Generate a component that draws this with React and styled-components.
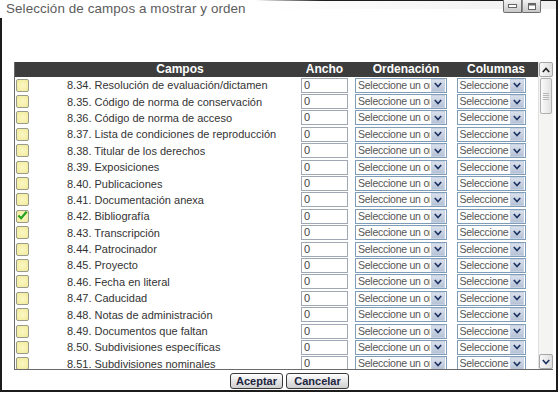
import React from "react";
import styled, { createGlobalStyle } from "styled-components";

const Global = createGlobalStyle`
  html, body { margin: 0; padding: 0; background: #fff; }
  body { font-family: "Liberation Sans", Arial, sans-serif; }
  * { box-sizing: border-box; }
`;

const Window = styled.div`
  width: 558px;
  height: 392px;
  display: flex;
  flex-direction: column;
  border-right: 2px solid #1c1c1c;
  border-bottom: 2px solid #1c1c1c;
  background: #fff;
`;

const TitleBar = styled.div`
  height: 18px;
  flex: none;
  display: flex;
  align-items: flex-start;
  justify-content: space-between;
  padding-left: 6px;
  padding-right: 15px;
  border-top: 1px solid transparent;
  border-image: linear-gradient(to right, rgba(30,30,30,0) 46%, #1c1c1c 58%) 1;
  background: linear-gradient(to right, #fff 46%, #f0f0f0 100%);
  background-size: 100% 8px;
  background-repeat: no-repeat;
`;

const Title = styled.div`
  font-size: 13.4px;
  line-height: 15px;
  color: #5c5c5c;
  letter-spacing: 0.1px;
`;

const WinButtons = styled.div`
  display: flex;
  margin-top: -1px;
`;

const WinButton = styled.div`
  width: 19px;
  height: 13px;
  border: 1px solid #6e6e6e;
  border-top: none;
  background: linear-gradient(#f2f2f2, #c8c8c8);
  display: flex;
  align-items: center;
  justify-content: center;
  & + & { border-left: 1px solid #8a8a8a; }
  &:first-child { border-bottom-left-radius: 2px; }
  &:last-child { border-bottom-right-radius: 2px; }
`;

const Main = styled.div`
  flex: 1;
  display: flex;
  flex-direction: column;
  border-left: 2px solid #1c1c1c;
  padding: 44px 3px 0 12px;
`;

const TableFrame = styled.div`
  height: 308px;
  flex: none;
  display: flex;
  border-left: 1px solid #6a6a6a;
  border-bottom: 1px solid #6a6a6a;
`;

const TableContent = styled.div`
  flex: 1;
  display: flex;
  flex-direction: column;
  min-width: 0;
`;

const cols = "47px 236px 53px 100px 80px 1fr";

const Header = styled.div`
  height: 15px;
  flex: none;
  display: grid;
  grid-template-columns: ${cols};
  background: #3d3d3d;
  color: #fff;
  font-weight: bold;
  font-size: 12px;
  line-height: 15px;
`;

const HeadCell = styled.div`
  text-align: center;
  white-space: nowrap;
  ${(p) => (p.$shift ? `transform: translateX(${p.$shift}px);` : "")}
`;

const Body = styled.div`
  flex: 1;
  overflow: hidden;
`;

const Row = styled.div`
  height: 16.4px;
  display: grid;
  grid-template-columns: ${cols};
  align-items: center;
  font-size: 11px;
  color: #333;
`;

const CheckCell = styled.div`
  padding-left: 1px;
  display: flex;
  align-items: center;
`;

const Check = styled.div`
  width: 13px;
  height: 13px;
  border: 1px solid #9a9a8a;
  border-radius: 2px;
  background: radial-gradient(circle at 50% 50%, #fbf7c4 0%, #f2eb9a 100%);
  display: flex;
  align-items: center;
  justify-content: center;
`;

const Label = styled.div`
  padding-left: 5px;
  white-space: nowrap;
  overflow: hidden;
`;

const NumInput = styled.div`
  justify-self: center;
  width: 47px;
  height: 15px;
  border: 1px solid #a0a8b4;
  background: #fff;
  font-size: 11px;
  line-height: 13px;
  padding-left: 2px;
  color: #444;
`;

const Select = styled.div`
  justify-self: center;
  width: ${(p) => p.$w}px;
  height: 15px;
  border: 1px solid #7f9db9;
  background: #fff;
  display: flex;
  align-items: stretch;
  padding: 0 1px 0 0;
`;

const SelectText = styled.div`
  flex: 1;
  min-width: 0;
  overflow: hidden;
  white-space: nowrap;
  font-size: 10.5px;
  letter-spacing: -0.25px;
  line-height: 13px;
  padding-left: 2px;
  color: #555;
`;

const Arrow = styled.div`
  width: 14px;
  flex: none;
  margin: 0 0 0 1px;
  background: linear-gradient(#d9e0ec, #b6c2d6);
  border: 1px solid #c8d2e2;
  display: flex;
  align-items: center;
  justify-content: center;
`;

const ScrollBar = styled.div`
  width: 15px;
  flex: none;
  display: flex;
  flex-direction: column;
  background: #f4f4f2;
  border-left: 1px solid #e0e0e0;
`;

const ScrollBtn = styled.div`
  height: 15px;
  flex: none;
  border: 1px solid #a6a6a6;
  border-radius: 2px;
  background: linear-gradient(to right, #f8f8f8, #dedede);
  display: flex;
  align-items: center;
  justify-content: center;
`;

const Track = styled.div`
  flex: 1;
  padding-top: 1px;
`;

const Thumb = styled.div`
  height: 36px;
  margin: 0 1px;
  border: 1px solid #b0b0b0;
  border-radius: 2px;
  background: linear-gradient(to right, #fafafa, #e2e2e2);
  display: flex;
  flex-direction: column;
  align-items: center;
  justify-content: center;
  gap: 1px;
`;

const Grip = styled.div`
  width: 6px;
  height: 1px;
  background: #b8b8b8;
`;

const ButtonRow = styled.div`
  display: flex;
  justify-content: center;
  gap: 3px;
  padding: 3px 0 0 12px;
`;

const Button = styled.div`
  height: 16px;
  width: ${(p) => p.$w}px;
  border: 1px solid #3a3a3a;
  border-radius: 3px;
  background: linear-gradient(#ffffff, #e2e2e2 60%, #cfcfcf);
  font-size: 11px;
  font-weight: bold;
  color: #1c2440;
  display: flex;
  align-items: center;
  justify-content: center;
  line-height: 14px;
`;

const Chevron = ({ up }) => (
  <svg width="8" height="6" viewBox="0 0 8 6">
    <path
      d={up ? "M0.8 5 L4 1.5 L7.2 5" : "M0.8 1 L4 4.5 L7.2 1"}
      fill="none"
      stroke={up ? "#222" : "#1f3463"}
      strokeWidth="1.7"
    />
  </svg>
);

const CheckMark = () => (
  <svg width="12" height="11" viewBox="0 0 12 11" style={{ marginTop: -2 }}>
    <path d="M1.5 5.5 L4.5 8.5 L10.5 1.5" fill="none" stroke="#22a022" strokeWidth="2.4" />
  </svg>
);

const rows = [
  "8.34. Resolución de evaluación/dictamen",
  "8.35. Código de norma de conservación",
  "8.36. Código de norma de acceso",
  "8.37. Lista de condiciones de reproducción",
  "8.38. Titular de los derechos",
  "8.39. Exposiciones",
  "8.40. Publicaciones",
  "8.41. Documentación anexa",
  "8.42. Bibliografía",
  "8.43. Transcripción",
  "8.44. Patrocinador",
  "8.45. Proyecto",
  "8.46. Fecha en literal",
  "8.47. Caducidad",
  "8.48. Notas de administración",
  "8.49. Documentos que faltan",
  "8.50. Subdivisiones específicas",
  "8.51. Subdivisiones nominales",
];

export default function App() {
  return (
    <>
      <Global />
      <Window>
        <TitleBar>
          <Title>Selección de campos a mostrar y orden</Title>
          <WinButtons>
            <WinButton>
              <svg width="9" height="4" viewBox="0 0 9 4">
                <rect x="0.5" y="0.5" width="8" height="3" fill="#fff" stroke="#666" />
              </svg>
            </WinButton>
            <WinButton>
              <svg width="8" height="7" viewBox="0 0 8 7">
                <rect x="0.5" y="0.5" width="7" height="6" fill="#fff" stroke="#666" />
                <rect x="0.5" y="0.5" width="7" height="2" fill="#666" />
              </svg>
            </WinButton>
          </WinButtons>
        </TitleBar>
        <Main>
          <TableFrame>
            <TableContent>
              <Header>
                <HeadCell />
                <HeadCell>Campos</HeadCell>
                <HeadCell>Ancho</HeadCell>
                <HeadCell $shift={5}>Ordenación</HeadCell>
                <HeadCell $shift={5}>Columnas</HeadCell>
                <HeadCell />
              </Header>
              <Body>
                {rows.map((r, i) => (
                  <Row key={r}>
                    <CheckCell>
                      <Check>{i === 8 && <CheckMark />}</Check>
                    </CheckCell>
                    <Label>{r}</Label>
                    <NumInput>0</NumInput>
                    <Select $w={92}>
                      <SelectText>Seleccione un orden</SelectText>
                      <Arrow><Chevron /></Arrow>
                    </Select>
                    <Select $w={69}>
                      <SelectText>Seleccione</SelectText>
                      <Arrow><Chevron /></Arrow>
                    </Select>
                    <div />
                  </Row>
                ))}
              </Body>
            </TableContent>
            <ScrollBar>
              <ScrollBtn><Chevron up /></ScrollBtn>
              <Track>
                <Thumb>
                  <Grip /><Grip /><Grip /><Grip />
                </Thumb>
              </Track>
              <ScrollBtn><Chevron /></ScrollBtn>
            </ScrollBar>
          </TableFrame>
          <ButtonRow>
            <Button $w={53}>Aceptar</Button>
            <Button $w={63}>Cancelar</Button>
          </ButtonRow>
        </Main>
      </Window>
    </>
  );
}
